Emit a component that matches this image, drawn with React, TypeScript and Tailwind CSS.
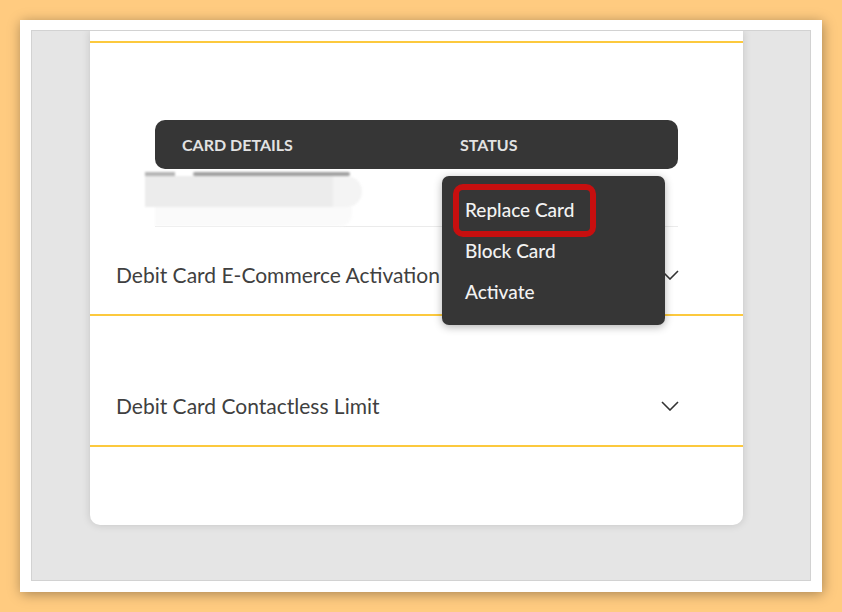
const menuItems = ["Replace Card", "Block Card", "Activate"];

function Chevron() {
  return (
    <svg width="18" height="10" viewBox="0 0 18 10" fill="none">
      <polyline points="1,1 9,9 17,1" stroke="#333" strokeWidth="1.6" />
    </svg>
  );
}

function Section({ title, spacer }: { title: string; spacer: string }) {
  return (
    <div className={spacer}>
      <div className="h-[80px] flex items-center justify-between pl-[26px] pr-[64px] border-b-2 border-[#fcc93e]">
        <span className="text-[21px] text-[#404040]">{title}</span>
        <Chevron />
      </div>
    </div>
  );
}

export default function App() {
  return (
    <div className="w-[842px] h-[612px] bg-[#ffcb80] p-5 font-['Lato',sans-serif]">
      <div className="h-full bg-white pl-[11px] pr-[11px] pt-[10px] pb-[11px] shadow-[1px_2px_12px_rgba(0,0,0,0.35)]">
        <div className="h-full border border-[#d2d2d2] bg-[#e5e5e5] overflow-hidden pl-[58px]">
          {/* Card */}
          <div className="relative w-[653px] h-[494px] bg-white rounded-b-[10px] shadow-[0_0_8px_rgba(0,0,0,0.15)]">
            <div className="h-[12px] border-b-2 border-[#fcc93e]" />

            {/* Table header */}
            <div className="mt-[77px] ml-[65px] w-[523px] h-[49px] rounded-[10px] bg-[#363636] flex items-center pl-[27px] text-[16px] font-bold text-[#e2e2e2]">
              <span className="w-[278px]">CARD DETAILS</span>
              <span>STATUS</span>
            </div>

            {/* Blurred row */}
            <div className="mt-[3px] ml-[65px] w-[523px] h-[55px] border-b border-[#ebebeb]">
              <div className="-ml-[10px] w-[217px] h-[54px] flex flex-col blur-[1px]">
                <div className="h-[4px] flex gap-[18px]">
                  <div className="w-[30px] bg-[#b4b4b4]" />
                  <div className="w-[157px] rounded-full bg-[#a0a0a0]" />
                </div>
                <div className="h-[31px] flex">
                  <div className="w-[188px] bg-[#ececec]" />
                  <div className="w-[29px] rounded-r-full bg-[#f4f4f4]" />
                </div>
                <div className="h-[19px] flex pl-[10px] pr-[10px]">
                  <div className="flex-1 bg-[#fafafa] rounded-br-[12px]" />
                </div>
              </div>
            </div>

            <Section title="Debit Card E-Commerce Activation" spacer="pt-[9px]" />
            <Section title="Debit Card Contactless Limit" spacer="pt-[51px]" />

            {/* Dropdown menu */}
            <div className="absolute z-10 left-[352px] top-[145px] w-[223px] h-[149px] rounded-[7px] bg-[#363636] shadow-[0_2px_8px_rgba(0,0,0,0.3)] pt-[14px] flex flex-col">
              {menuItems.map((item, i) => (
                <div key={item} className="relative h-[41px] flex items-center pl-[23px] text-[19px] font-medium text-[#f2f2f2]">
                  {item}
                  {i === 0 && (
                    <div className="absolute left-[11px] -top-[6px] w-[143px] h-[53px] border-[6px] border-[#c70f0f] rounded-[10px]" />
                  )}
                </div>
              ))}
            </div>
          </div>
        </div>
      </div>
    </div>
  );
}
